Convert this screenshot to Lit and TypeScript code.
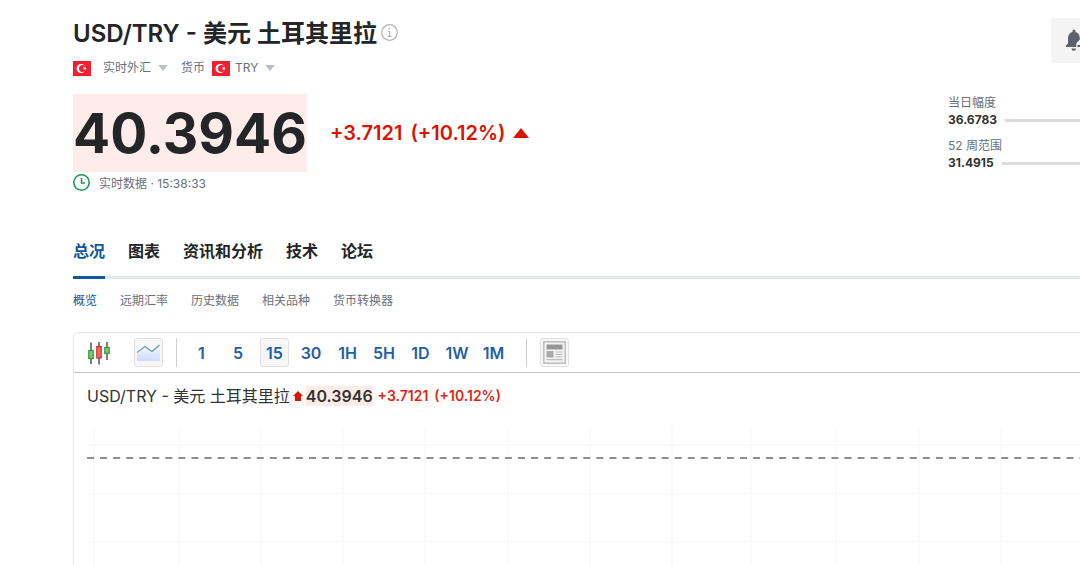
import { LitElement, html, css, svg } from "lit";
import { customElement, state } from "lit/decorators.js";

const FONT = css`Inter, "Noto Sans CJK SC", sans-serif`;

const flag = html`<svg class="flag" viewBox="0 0 18 15" role="img" aria-label="土耳其">
  <rect width="18" height="15" fill="#f0202f" />
  <circle cx="8.2" cy="7.5" r="4.6" fill="#fff" />
  <circle cx="9.5" cy="7.5" r="3.5" fill="#f0202f" />
  <path d="M13.9 7.5l-1.5.5.1 1.5-1-1.2-1.4.5.7-1.3-.7-1.3 1.4.4 1-1.1-.1 1.5z" fill="#fff" />
</svg>`;

const caret = html`<svg class="caret" viewBox="0 0 10 6" aria-hidden="true">
  <path d="M0 0h10L5 6z" fill="#b9c1ca" />
</svg>`;

@customElement("pair-header")
class PairHeader extends LitElement {
  static styles = css`
    :host { display: flex; font-family: ${FONT}; color: #232526; }
    .main { flex: 1; min-width: 0; padding-top: 18px; }
    .title { display: flex; align-items: center; gap: 4px; }
    h1 { margin: 0; font-size: 24px; line-height: 32px; font-weight: 600; white-space: nowrap; }
    .info { border: 0; padding: 0; background: none; width: 17px; height: 17px; margin-bottom: 4px; }
    .info svg { display: block; }
    .meta { display: flex; align-items: center; height: 20px; margin-top: 8px; font-size: 12px; line-height: 20px; color: #6a707c; }
    .flag { width: 18px; height: 15px; flex: none; }
    .caret { width: 10px; height: 6px; flex: none; }
    select { appearance: none; border: 0; padding: 0; margin: 0; background: none; font: inherit; color: inherit; line-height: 20px; }
    .pick { display: flex; align-items: center; gap: 6px; }
    .market { margin-left: 12px; }
    .currency { display: flex; align-items: center; margin-left: 13px; gap: 7px; }
    .unit { display: flex; align-items: center; gap: 5px; }
    .quote { display: flex; align-items: center; gap: 23px; margin-top: 16px; }
    .price { background: #fdece9; font-size: 55px; line-height: 78px; font-weight: 700; }
    .change { display: flex; align-items: center; gap: 8px; color: #d91400; font-size: 20px; line-height: 28px; font-weight: 600; }
    .up { width: 16px; height: 10px; }
    .live { display: flex; align-items: center; gap: 9px; height: 21px; font-size: 12px; color: #6a707c; }
    .aside { flex: none; width: 132px; padding-top: 18px; }
    .alert { display: flex; align-items: center; margin-left: 103px; width: 60px; height: 45px; padding: 0 0 0 15px; border: 0; border-radius: 3px; background: #f4f4f4; }
    .ranges { margin: 32px 0 0; display: grid; gap: 9px; }
    dl, dt, dd { margin: 0; }
    dt { font-size: 12px; line-height: 16px; color: #6a707c; }
    dd { display: flex; align-items: center; gap: 8px; font-size: 12px; line-height: 18px; font-weight: 700; color: #333; }
    .track { flex: 1; height: 3px; background: #dadcdf; }
  `;

  render() {
    return html`
      <div class="main">
        <div class="title">
          <h1>USD/TRY - 美元 土耳其里拉</h1>
          <button class="info" aria-label="信息">
            <svg width="17" height="17" viewBox="0 0 17 17" fill="none" stroke="#b5b5b5">
              <circle cx="8.5" cy="8.5" r="7.8" stroke-width="1.2" />
              <path d="M7 7.5h1.7v4.8M6.8 12.4h3.6" stroke-width="1.1" />
              <circle cx="8.4" cy="4.8" r=".5" fill="#b5b5b5" stroke-width=".8" />
            </svg>
          </button>
        </div>
        <div class="meta">
          ${flag}
          <label class="pick market">
            <select aria-label="市场"><option>实时外汇</option></select>${caret}
          </label>
          <div class="currency">
            <label for="unit">货币</label>
            <div class="unit">
              ${flag}
              <div class="pick"><select id="unit"><option>TRY</option></select>${caret}</div>
            </div>
          </div>
        </div>
        <div class="quote">
          <div class="price">40.3946</div>
          <div class="change">
            <span>+3.7121</span><span>(+10.12%)</span>
            <svg class="up" viewBox="0 0 16 10" aria-hidden="true"><path d="M0 10L8 0l8 10z" fill="#d91400" /></svg>
          </div>
        </div>
        <div class="live">
          <svg width="17" height="17" viewBox="0 0 17 17" fill="none" stroke="#23965b" stroke-width="1.6" aria-hidden="true">
            <circle cx="8.5" cy="8.5" r="7.7" /><path d="M8.5 4v5H12" />
          </svg>
          <span>实时数据 · 15:38:33</span>
        </div>
      </div>
      <div class="aside">
        <button class="alert" aria-label="创建提醒">
          <svg width="24" height="24" viewBox="0 0 24 24" aria-hidden="true">
            <path d="M0 18v-1.6l2-2V9.3C2 6 3.7 3.7 6.5 3V2a1.5 1.5 0 0 1 3 0v1c2.4.6 4.300 3 4.300 6v1.500L10.500 14l-.5 4z" fill="#5b616e" />
            <path d="M5.500 19.500h4.500a2.200 2.200 0 0 1-4.500 0z" fill="#5b616e" />
            <path d="M11.500 17h11M17 11.500v11" stroke="#5b616e" stroke-width="2" />
          </svg>
        </button>
        <dl class="ranges">
          <div><dt>当日幅度</dt><dd>36.6783<span class="track"></span></dd></div>
          <div><dt>52 周范围</dt><dd>31.4915<span class="track"></span></dd></div>
        </dl>
      </div>
    `;
  }
}

@customElement("page-tabs")
class PageTabs extends LitElement {
  static styles = css`
    :host { display: block; font-family: ${FONT}; }
    a { text-decoration: none; white-space: nowrap; }
    .tabs { display: flex; gap: 23px; border-bottom: 3px solid #e6e9eb; }
    .tabs a { font-size: 16px; line-height: 24px; font-weight: 600; color: #232526; padding-bottom: 13px; margin-bottom: -3px; border-bottom: 3px solid transparent; }
    .tabs .on { color: #1256a0; border-color: #1256a0; }
    .subs { display: flex; gap: 23px; margin-top: 12px; font-size: 12px; line-height: 20px; }
    .subs a { color: #6a707c; }
    .subs .on { color: #1256a0; }
  `;

  render() {
    const links = (items: string[]) =>
      items.map((t, i) => html`<a href="#" class=${i ? "" : "on"}>${t}</a>`);
    return html`
      <nav class="tabs">${links(["总况", "图表", "资讯和分析", "技术", "论坛"])}</nav>
      <nav class="subs">${links(["概览", "远期汇率", "历史数据", "相关品种", "货币转换器"])}</nav>
    `;
  }
}

@customElement("price-chart")
class PriceChart extends LitElement {
  @state() private interval = "15";

  static styles = css`
    :host { display: flex; flex-direction: column; font-family: ${FONT}; border: 1px solid #e6e6e6; border-width: 1px 0 0 1px; border-top-left-radius: 5px; }
    .bar { display: flex; align-items: center; height: 39px; padding-left: 12px; border-bottom: 1px solid #c4c4c4; }
    button { box-sizing: border-box; display: flex; align-items: center; justify-content: center; width: 29px; height: 29px; padding: 0; border: 1px solid transparent; border-radius: 3px; background: none; font: 600 16px/24px ${FONT}; color: #1f5fa8; }
    .framed { background: #f7f7f7; border-color: #e0e0e0; }
    .candles { width: 26px; margin-right: 22px; }
    .rule { width: 1px; height: 29px; background: #cfcfcf; margin: 0 13px; }
    .intervals { display: flex; justify-content: space-between; width: 321px; margin: 0 5px 0 -3px; }
    .legend { display: flex; align-items: center; height: 20px; margin: 13px 0 0 13px; font-size: 16px; line-height: 20px; color: #333; white-space: nowrap; }
    .arrow { width: 10px; height: 10px; margin: 0 3px; }
    .last { background: #fdece9; font-weight: 600; }
    .delta { display: flex; gap: 6px; margin-left: 5px; font-size: 14px; font-weight: 600; color: #e02612; }
    .plot { flex: 1; min-height: 140px; width: 100%; margin-top: 4px; }
  `;

  render() {
    const columns = [20, 105, 187, 269, 351, 434, 516, 598, 677, 762, 845, 927];
    const rows = [35, 84, 132];
    return html`
      <div class="bar">
        <button class="candles" aria-label="K线图">
          <svg width="24" height="24" viewBox="0 0 24 24" aria-hidden="true">
            <path d="M4 1.500v21.500M12 1v22.500M20 1v18" stroke="#555" stroke-width="1.500" />
            <rect x="1.800" y="9.500" width="4.400" height="8" fill="#7fca7a" stroke="#2c9a35" stroke-width="1.200" />
            <rect x="9.800" y="5.500" width="4.400" height="11.500" fill="#ee6b6b" stroke="#d22b2b" stroke-width="1.200" />
            <rect x="17.800" y="6.500" width="4.400" height="6" fill="#7fca7a" stroke="#2c9a35" stroke-width="1.200" />
          </svg>
        </button>
        <button class="framed" aria-label="面积图">
          <svg width="23" height="17" viewBox="0 0 23 17" aria-hidden="true">
            <defs>
              <linearGradient id="fill" x2="0" y2="1">
                <stop offset="0" stop-color="#f3f6fd" /><stop offset="1" stop-color="#cfdbf5" />
              </linearGradient>
            </defs>
            <path d="M0 10l8-6 7 5 8-7v15H0z" fill="url(#fill)" />
            <path d="M0 8.500L8 2.500l7 5L22.500 1" fill="none" stroke="#6f9bc9" stroke-width="1.400" />
          </svg>
        </button>
        <span class="rule"></span>
        <div class="intervals">
          ${["1", "5", "15", "30", "1H", "5H", "1D", "1W", "1M"].map(
            (t) => html`<button class=${t === this.interval ? "framed" : ""} @click=${() => (this.interval = t)}>${t}</button>`
          )}
        </div>
        <span class="rule"></span>
        <button class="framed" aria-label="新闻">
          <svg width="23" height="23" viewBox="0 0 23 23" aria-hidden="true">
            <rect x=".8" y=".8" width="21.400" height="21.400" fill="#f4f4f4" stroke="#bdbdbd" stroke-width="1.500" />
            <rect x="3.500" y="3.500" width="16" height="5" fill="#969696" />
            <rect x="3.500" y="10" width="7" height="6.500" fill="#aaa" />
            <path d="M12.500 11h7M12.500 13.500h7M12.500 16h7M3.500 18.700h16" stroke="#bbb" stroke-width="1.200" />
          </svg>
        </button>
      </div>
      <div class="legend">
        <span>USD/TRY - 美元 土耳其里拉</span>
        <svg class="arrow" viewBox="0 0 10 10" aria-hidden="true"><path d="M5 0l5 5H8v5H2V5H0z" fill="#e01600" /></svg>
        <span class="last">40.3946</span>
        <span class="delta"><span>+3.7121</span><span>(+10.12%)</span></span>
      </div>
      <svg class="plot" role="img" aria-label="USD/TRY 走势图">
        ${columns.map((x) => svg`<line x1=${x} x2=${x} y1="16" y2="100%" stroke="#fafafa" stroke-width="2" />`)}
        ${rows.map((y) => svg`<line x1="14" x2="100%" y1=${y} y2=${y} stroke="#fafafa" stroke-width="2" />`)}
        <line x1="13" x2="100%" y1="48" y2="48" stroke="#8e8e8e" stroke-width="2" stroke-dasharray="7 6.060" />
      </svg>
    `;
  }
}

@customElement("app-root")
class AppRoot extends LitElement {
  static styles = css`
    :host { box-sizing: border-box; display: flex; flex-direction: column; min-height: 100vh; padding-left: 73px; overflow: hidden; background: #fff; }
    page-tabs { margin-top: 46px; }
    price-chart { flex: 1; margin-top: 21px; }
  `;

  render() {
    return html`<pair-header></pair-header><page-tabs></page-tabs><price-chart></price-chart>`;
  }
}
